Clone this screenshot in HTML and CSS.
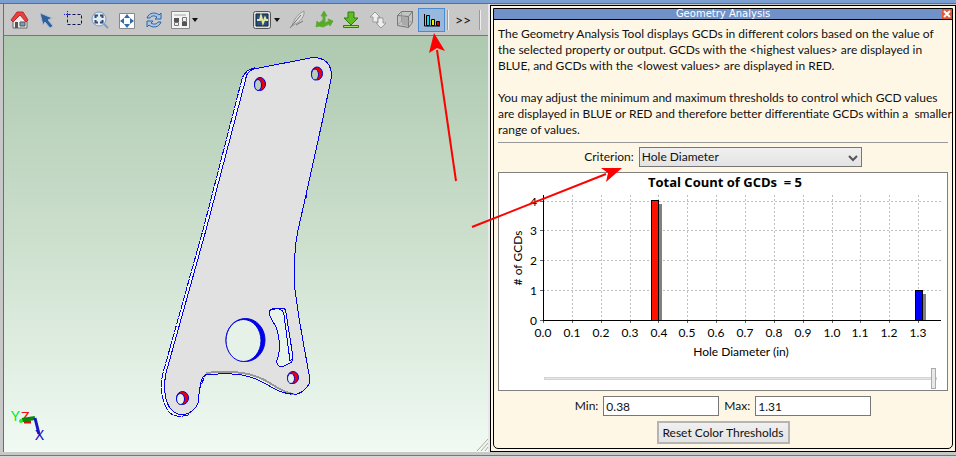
FILE: index.html
```html
<!DOCTYPE html>
<html lang="en">
  <head>
    <meta charset="utf-8">
    <title>Geometry Analysis</title>
    <link rel="stylesheet" href="styles.css">
  </head>
  <body>
    <div id="main">
      <div id="viewer">
        <div class="toolbar">
          <button title="Home"><svg width="20" height="20" viewBox="0 0 20 20"><path d="M4 10v8h14V9l-7-6z" fill="#eee" stroke="#666"/><path d="M6 12h3v6H6z" fill="#555"/><path d="M11 12h5v4h-5z" fill="#7a9cc0" stroke="#555"/><path d="M2 10l6-8h6l5 8-2 2-6-7-7 7z" fill="#e84040" stroke="#c02828"/></svg></button>
          <button title="Select"><svg width="20" height="20" viewBox="0 0 20 20"><path d="M4 3l12 5-4 2 5 6-3 2-5-6-2 3z" fill="#2f5f9c" stroke="#a9bdd4"/></svg></button>
          <button title="Select area"><svg width="20" height="20" viewBox="0 0 20 20"><path d="M4.500 4.500h14v10h-14z" fill="none" stroke="#111155" stroke-dasharray="3 2"/><path d="M4.500 1v6M1 4.500h6" stroke="#2222cc" stroke-dasharray="1 1"/></svg></button>
          <button title="Zoom"><svg width="20" height="20" viewBox="0 0 20 20"><path d="M13 13l5 5" stroke="#7a9cc8" stroke-width="2"/><circle cx="9" cy="9" r="7" fill="#e6eaec" stroke="#7a9cc4"/><path d="M5.500 8V5.500H8M10 5.500h2.500V8M12.500 10v2.500H10M8 12.500H5.500V10" fill="none" stroke="#2b4f7a" stroke-width="2"/></svg></button>
          <button title="Fit"><svg width="20" height="20" viewBox="0 0 20 20"><path d="M2.500 3.500h15v15h-15z" fill="#fff" stroke="#888"/><path d="M10 4l3 4H7zM10 18l3-4H7zM3 11l4-3v6zM17 11l-4-3v6z" fill="#2d68b0"/></svg></button>
          <button title="Refresh"><svg width="20" height="20" viewBox="0 0 20 20"><path d="M3 8c2-6 9-6 12-3l2-2v6h-6l2-2C10 5 7 6 6 8zM17 12c-2 6-9 6-12 3l-2 2v-6h6l-2 2c3 2 6 1 7-1z" fill="#a9c6e8" stroke="#2d62a6"/></svg></button>
          <button title="Views" class="drop"><svg width="20" height="20" viewBox="0 0 20 20"><path d="M1.500 1.500h18v17h-18z" fill="#f4f4f4" stroke="#888"/><path d="M4 5h12" stroke="#ccc" stroke-width="2"/><path d="M4 8h5v4H4zM12 12h5v4h-5z" fill="#555"/><path d="M4.500 12.500h4v3h-4zM12.500 7.500h4v4h-4z" fill="#eee" stroke="#777"/></svg><i></i></button>
          <span class="space"></span>
          <button title="Graph" class="drop"><svg width="20" height="20" viewBox="0 0 20 20"><rect x="1.500" y="1.500" width="17" height="17" rx="2" fill="#ddd" stroke="#555"/><path d="M4 4h12v12H4z" fill="#285080" stroke="#123"/><path d="M5 10h3l1-4 2 7 2-5 1 2h2" fill="none" stroke="#e8e8a0" stroke-width="2"/></svg><i></i></button>
          <button title="Draw"><svg width="20" height="20" viewBox="0 0 20 20"><path d="M5 16C7 9 11 4 17 1c1 5-4 11-9 13z" fill="#ddd" stroke="#999"/><path d="M3 18L14 5M9 15l7-4" stroke="#777"/></svg></button>
          <button title="Orient"><svg width="20" height="20" viewBox="0 0 20 20"><path d="M10 1l3 5h-2v7l4-2-1-2 5 2-3 5-1-2-6 3-4-1-3 1 1-6 2 2 4-3V6H7z" fill="#52ad20" stroke="#68a942"/></svg></button>
          <button title="Import"><svg width="20" height="20" viewBox="0 0 20 20"><path d="M7 2h6v6h4l-7 7-7-7h4z" fill="#5fbd20" stroke="#2d7d10"/><path d="M2.500 15.500h15v2h-15z" fill="#a7df68" stroke="#2d7d10"/></svg></button>
          <button title="Swap"><svg width="20" height="20" viewBox="0 0 20 20"><path d="M7 2l5 5h-2v5H5V7H2z" fill="#eee" stroke="#999"/><path d="M13 18l-5-5h2V8h5v5h3z" fill="#eee" stroke="#999"/></svg></button>
          <button title="Solid"><svg width="20" height="20" viewBox="0 0 20 20"><path d="M2.500 5.500l4-4h11v11l-4 5-11-2z" fill="#c4c4c4" stroke="#777"/><path d="M2.500 5.500l11 1 4-5M13.500 6.500v11" fill="none" stroke="#777"/><path d="M6.500 2v9l-4 4M6.500 11l11 1" fill="none" stroke="#999"/><path d="M7 7h6v9l-6-1z" fill="#aaa"/></svg></button>
          <button title="Geometry analysis" class="on"><svg width="20" height="20" viewBox="0 0 20 20"><path d="M2.500 4v12H18" fill="none" stroke="#000"/><path d="M4.500 5.500h3v10h-3z" fill="#10d8f0" stroke="#000"/><path d="M9.500 9.500h3v6h-3z" fill="#e8f000" stroke="#000"/><path d="M14.500 11.500h3v4h-3z" fill="#e00000" stroke="#000"/></svg></button>
          <span class="sep"></span>
          <button title="More" class="more">&gt;&gt;</button>
          <span class="sep"></span>
        </div>
        <svg class="scene" viewBox="4 36 484 416" preserveAspectRatio="xMinYMin meet">
          <!-- back side of the plate -->
          <path class="back" d="M254 68Q245 70 242 79L203 230 163 373C159 389 163 402 168 411Q175 419 188 415L205 376 246 77z"/>
          <!-- front face, with the cut-outs -->
          <path class="face" d="M254 69L310 58Q328 56 331 71L331 79 323 118 306 195 298 230C294 250 294 274 295 290L299 318 306 358 309 374V384Q304 393 294 395C281 394 273 380 250 374C239 371 225 372 210 373Q204 374 202 379C199 387 199 396 198 403Q194 413 183 415C170 414 166 402 165 393Q164 383 166 373L206 230 246 78Q247 71 254 69z"/>
          <path class="under" d="M206 373Q240 369 260 378C273 383 281 393 294 394"/>
          <path class="edge" d="M206 375Q240 371 258 380C271 386 280 394 293 394M306 192V198M306 357V363"/>
          <g class="hole">
            <ellipse class="red" cx="260" cy="84" rx="5.500" ry="6.500"/><ellipse class="top" cx="258" cy="85" rx="3.500" ry="5.500"/>
            <ellipse class="red" cx="317" cy="73.500" rx="5.500" ry="6.500"/><ellipse class="top" cx="315" cy="74.500" rx="3.500" ry="5.500"/>
            <ellipse class="red" cx="182.500" cy="398" rx="6" ry="6.500"/><ellipse class="low" cx="180.500" cy="399" rx="4" ry="5.500"/>
            <ellipse class="red" cx="293" cy="377.500" rx="5.500" ry="6"/><ellipse class="low" cx="291" cy="378.500" rx="3.500" ry="5"/>
            <ellipse class="blue" cx="245.500" cy="340" rx="19.500" ry="21.500"/><ellipse class="low" cx="243.500" cy="340.500" rx="17.500" ry="21"/>
          </g>
          <path class="slot" d="M269 312Q270 309 275 309L282 308Q286 308 286 313L293 357Q293 362 290 363L282 367Q276 366 277 360C282 347 278 331 275 325Q270 318 269 312z"/>
          <path class="edge" d="M272 309Q283 307 284 315L290 361L293 358"/>
          <!-- axis triad -->
          <g class="triad">
            <text x="11" y="421" fill="#00ee22">Y</text>
            <text x="21" y="422" fill="#ee1111">Z</text>
            <path d="M24 422h7" stroke="#e01010" stroke-width="3"/>
            <path d="M22 420l13-2" stroke="#0a8a0a" stroke-width="4"/>
            <circle cx="21" cy="421" r="2" fill="#22ee22"/>
            <path d="M35 418l4 16" stroke="#1818c0" stroke-width="3"/>
            <text x="35" y="440" fill="#1111cc">X</text>
          </g>
          <path class="grip" d="M477 451l11-12M481 451l7-8M485 451l3-4"/>
        </svg>
      </div>

      <form id="panel">
        <div class="inner">
          <div class="title"><h1>Geometry Analysis</h1><button type="button" class="close" title="Close"><svg width="10" height="10" viewBox="0 0 10 10"><path d="M2 2l6 6M8 2l-6 6" stroke="#fff" stroke-width="2"/></svg></button></div>
          <div class="content">
            <p>The Geometry Analysis Tool displays GCDs in different colors based on the value of<br>
            the selected property or output. GCDs with the &lt;highest values&gt; are displayed in<br>
            BLUE, and GCDs with the &lt;lowest values&gt; are displayed in RED.</p>
            <p>You may adjust the minimum and maximum thresholds to control which GCD values<br>
            are displayed in BLUE or RED and therefore better differentiate GCDs within a&nbsp; smaller<br>
            range of values.</p>
            <hr>
            <div class="row">
              <label for="criterion">Criterion:</label>
              <span class="pick"><select id="criterion"><option>Hole Diameter</option></select><svg width="10" height="8" viewBox="0 0 10 8"><path d="M1 1l4 4 4-4" fill="none" stroke="#555" stroke-width="2"/></svg></span>
            </div>
            <div class="chart">
              <svg viewBox="0 0 448 188">
                <text class="head" x="226" y="14">Total Count of GCDs&#160; = 5</text>
                <path class="grid" d="M44 28H442M44 57H442M44 87H442M44 117H442M73 22V147M102 22V147M131 22V147M159 22V147M188 22V147M217 22V147M246 22V147M275 22V147M304 22V147M333 22V147M361 22V147M390 22V147M419 22V147"/>
                <path class="shadow" d="M160 31h3v116h-3zM424 121h3v26h-3z"/>
                <rect class="bar" x="152" y="27" width="7" height="120" fill="#ff1100"/>
                <rect class="bar" x="416" y="117" width="7" height="30" fill="#0000ff"/>
                <path class="axis" d="M44 22V147H442"/>
                <path class="tick" d="M41 28h3M41 57h3M41 87h3M41 117h3M41 147h3M44 148v2M73 148v2M102 148v2M131 148v2M159 148v2M188 148v2M217 148v2M246 148v2M275 148v2M304 148v2M333 148v2M361 148v2M390 148v2M419 148v2"/>
                <g class="ynum">
                  <text x="38" y="33">4</text><text x="38" y="62">3</text><text x="38" y="92">2</text><text x="38" y="122">1</text><text x="38" y="152">0</text>
                </g>
                <g class="xnum">
                  <text x="44" y="164">0.0</text><text x="73" y="164">0.1</text><text x="102" y="164">0.2</text><text x="131" y="164">0.3</text><text x="160" y="164">0.4</text><text x="188" y="164">0.5</text><text x="217" y="164">0.6</text><text x="246" y="164">0.7</text><text x="275" y="164">0.8</text><text x="304" y="164">0.9</text><text x="333" y="164">1.0</text><text x="361" y="164">1.1</text><text x="390" y="164">1.2</text><text x="419" y="164">1.3</text>
                  <text x="242" y="183">Hole Diameter (in)</text>
                  <text transform="translate(23 85) rotate(-90)"># of GCDs</text>
                </g>
              </svg>
              <input type="range" id="threshold" aria-label="Threshold" min="0" max="100" value="100">
            </div>
            <div class="row limits">
              <label for="min">Min:</label><input type="text" id="min" value="0.38">
              <label for="max">Max:</label><input type="text" id="max" value="1.31">
            </div>
            <div class="row">
              <button type="button" class="reset">Reset Color Thresholds</button>
            </div>
          </div>
        </div>
      </form>
    </div>
    <div id="bottom"></div>

    <!-- callout arrows -->
    <svg id="arrows" width="640" height="240" viewBox="0 0 640 240">
      <path d="M456 181L437 50M472 227L606 174" stroke="#ff0000" stroke-width="2"/>
      <path d="M434 33L445 51 437 48 429 53zM622 168L606 182 608 173 601 168z" fill="#ff0000"/>
    </svg>
  </body>
</html>
```

FILE: styles.css
```css
* { box-sizing: border-box; }
body {
  margin: 0;
  min-height: 100vh;
  display: flex;
  flex-direction: column;
  border-top: 3px solid #7a9fd0;
  background: #c8c8c8;
  color: #111;
  font-family: Lato, "Open Sans", sans-serif;
  font-size: 12px;
  line-height: 16px;
}
button, input, select {
  font: inherit;
  color: inherit;
  margin: 0;
}
#main {
  flex: 1;
  display: flex;
  border-top: 1px solid #6c6c6c;
}
#viewer {
  flex: 484;
  min-width: 0;
  display: flex;
  flex-direction: column;
  margin-left: 3px;
  border-left: 1px solid #6c6c6c;
  border-right: 2px solid #e8e8e8;
}
.toolbar {
  display: flex;
  align-items: center;
  height: 32px;
  padding-left: 1px;
  border-bottom: 1px solid #777;
}
.toolbar button {
  display: flex;
  align-items: center;
  justify-content: center;
  flex: none;
  width: 27px;
  height: 24px;
  padding: 0;
  border: 1px solid transparent;
  background: none;
}
.toolbar .drop {
  width: 34px;
  gap: 2px;
}
.drop i {
  border: 3px solid transparent;
  border-top: 4px solid #111;
  border-bottom: 0;
}
.toolbar .on {
  border-color: #4a8ad0;
  background: #98b8dc;
}
.toolbar .more {
  width: 28px;
  font-size: 14px;
}
.space {
  flex: 1;
  max-width: 48px;
}
.sep {
  width: 2px;
  height: 20px;
  margin: 0 0 0 2px;
  border-left: 1px solid #999;
  border-right: 1px solid #eee;
}
.scene {
  display: block;
  flex: 1;
  width: 100%;
  min-height: 0;
  background: linear-gradient(#aec9b0, #cde0ce 50%, #f0faf3);
}
.back, .face, .slot, .edge, .under {
  stroke: #0000ee;
  shape-rendering: crispEdges;
}
.back { fill: #f4f8f4; stroke-dasharray: 7 1; }
.face { fill: #e1e1e1; }
.under { fill: none; stroke: #999; stroke-width: 2; }
.edge { fill: none; }
.slot { fill: #e8f3ea; }
.hole { stroke: #0000dd; }
.red { fill: #ee0000; }
.blue { fill: #0000ee; }
.top { fill: #b9cfb9; }
.low { fill: #e6f2e8; }
.triad { font-size: 14px; }
.grip { stroke: #a8a898; }

#panel {
  flex: 460;
  min-width: 0;
  display: flex;
  margin-top: 1px;
  border: 1px solid #000;
  background: #fff7e6;
  padding: 2px;
}
.inner {
  flex: 1;
  min-width: 0;
  border: 1px solid #000;
  border-radius: 0 0 5px 5px;
}
.title {
  display: flex;
  height: 11px;
  background: #7092c8;
  border-bottom: 1px solid #000;
}
h1 {
  flex: 1;
  margin: 0;
  padding-left: 10px;
  color: #fff;
  font: 10px/10px "DejaVu Sans", sans-serif;
  text-align: center;
}
.close {
  display: flex;
  padding: 0;
  border: 0;
  background: #e0583a;
}
.content {
  padding: 6px 4px 4px;
}
p {
  margin: 0 0 16px;
  white-space: nowrap;
}
hr {
  margin: -12px 0 4px;
  border: 0;
  border-top: 1px solid #999;
}
.row {
  display: flex;
  justify-content: center;
  align-items: center;
  gap: 5px;
}
.pick {
  position: relative;
}
.pick svg {
  position: absolute;
  right: 4px;
  top: 8px;
  pointer-events: none;
}
select {
  display: block;
  width: 223px;
  height: 20px;
  padding: 0 2px;
  appearance: none;
  border: 1px solid #777;
  border-radius: 0;
  background: linear-gradient(#f0f0f0, #e3e3e3);
}
.chart {
  margin: 5px 0;
  background: #fff;
  border: 1px solid #808080;
}
.chart svg {
  display: block;
  width: 100%;
}
.chart path, .chart rect { shape-rendering: crispEdges; }
.chart text { fill: #000; }
.head {
  font: bold 13px "Open Sans", sans-serif;
  text-anchor: middle;
}
.xnum { text-anchor: middle; }
.ynum { text-anchor: end; }
.grid { fill: none; stroke: #c0c0c0; stroke-dasharray: 2 2; }
.shadow { fill: #808080; }
.bar { stroke: #000; }
.axis { fill: none; stroke: #000; }
.tick { stroke: #666; }
input[type=range] {
  display: block;
  appearance: none;
  width: calc(100% - 55px);
  height: 22px;
  margin: 6px 10px 1px 45px;
  background: none;
}
input[type=range]::-webkit-slider-runnable-track {
  height: 3px;
  background: #e7e7e7;
  border: 1px solid #d3d3d3;
}
input[type=range]::-webkit-slider-thumb {
  appearance: none;
  width: 5px;
  height: 21px;
  margin-top: -10px;
  background: #e8e8e8;
  border: 1px solid #aaa;
}
input[type=text] {
  width: 116px;
  height: 20px;
  padding: 1px 2px 0;
  border: 1px solid #777;
  background: #fff;
}
.limits { margin-bottom: 5px; }
.reset {
  min-width: 133px;
  height: 23px;
  padding: 0;
  white-space: nowrap;
  border: 2px solid #b4b4b4;
  background: linear-gradient(#f0f0f0, #e3e3e3);
}
#bottom {
  height: 5px;
  border-top: 3px solid #c8c8c8;
  background: linear-gradient(#777 1px, #d8d8d8 1px);
}
#arrows {
  position: absolute;
  left: 0;
  top: 0;
  pointer-events: none;
}
```
